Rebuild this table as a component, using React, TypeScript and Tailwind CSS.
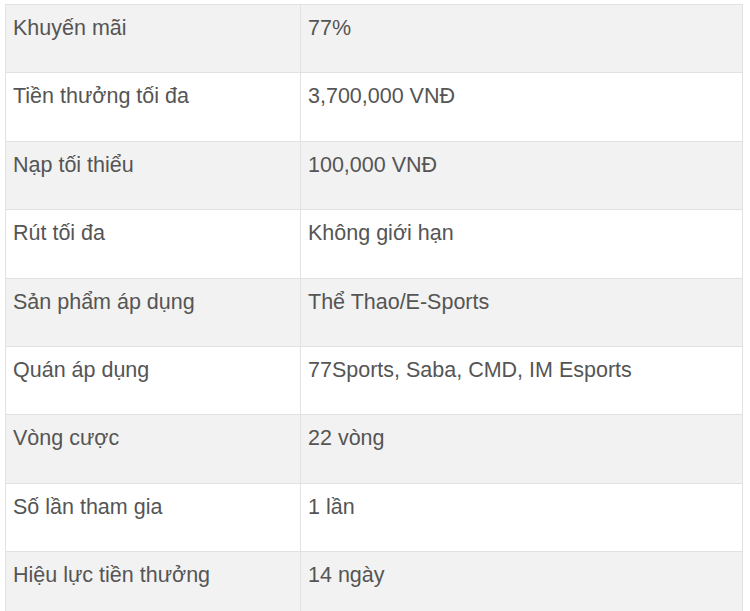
const rows: [string, string][] = [
  ["Khuyến mãi", "77%"],
  ["Tiền thưởng tối đa", "3,700,000 VNĐ"],
  ["Nạp tối thiểu", "100,000 VNĐ"],
  ["Rút tối đa", "Không giới hạn"],
  ["Sản phẩm áp dụng", "Thể Thao/E-Sports"],
  ["Quán áp dụng", "77Sports, Saba, CMD, IM Esports"],
  ["Vòng cược", "22 vòng"],
  ["Số lần tham gia", "1 lần"],
  ["Hiệu lực tiền thưởng", "14 ngày"],
];

export default function App() {
  return (
    <div className="w-[750px] h-[611px] bg-white pl-[5px] pt-[4px] overflow-hidden">
      <table
        className="w-[738px] border-collapse text-[#555555] text-[21.5px] leading-[30px]"
        style={{ fontFamily: '"Liberation Sans", Arial, sans-serif' }}
      >
        <tbody>
          {rows.map(([label, value], i) => (
            <tr key={label} className={i % 2 === 0 ? "bg-[#f2f2f2]" : "bg-white"}>
              <td className="w-[295px] h-[68.4px] align-top border border-[#e2e2e2] px-[7px] pt-[8px]">
                {label}
              </td>
              <td className="h-[68.4px] align-top border border-[#e2e2e2] px-[7px] pt-[8px]">
                {value}
              </td>
            </tr>
          ))}
        </tbody>
      </table>
    </div>
  );
}
